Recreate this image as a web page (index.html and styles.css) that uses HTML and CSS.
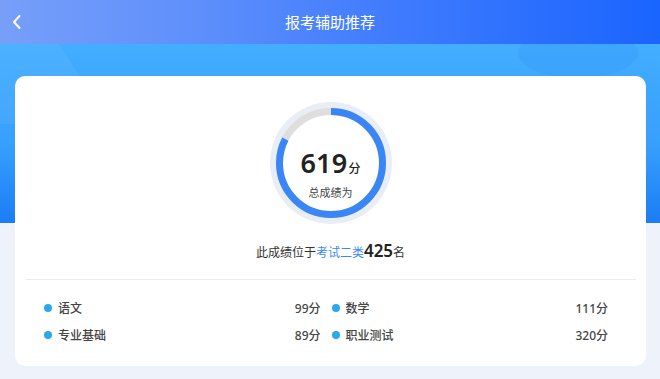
FILE: index.html
```html
<!DOCTYPE html>
<html lang="zh-CN">
<head>
<meta charset="utf-8">
<title>报考辅助推荐</title>
<link rel="stylesheet" href="styles.css">
</head>
<body>
<header class="topbar">
  <span class="back">
    <svg width="12" height="16" viewBox="0 0 12 16"><path d="M8.5 2 L3 8 L8.5 14" fill="none" stroke="#fff" stroke-width="2" stroke-linecap="round" stroke-linejoin="round"/></svg>
  </span>
  <h1 class="title">报考辅助推荐</h1>
</header>
<main class="hero">
  <span class="deco-slant"></span>
  <span class="deco-oval"></span>
  <section class="card">
    <div class="ring">
      <svg class="ring-svg" width="122" height="122" viewBox="0 0 122 122">
        <circle cx="61" cy="61" r="61" fill="#e9edf5"/>
        <circle cx="61" cy="61" r="51.5" fill="#fff" stroke="#dedede" stroke-width="7"/>
        <circle cx="61" cy="61" r="51.5" fill="none" stroke="#3a86f6" stroke-width="7" stroke-dasharray="267 400" transform="rotate(-90 61 61)"/>
      </svg>
      <div class="ring-text">
        <div class="score"><span class="num">619</span><span class="unit">分</span></div>
        <div class="score-label">总成绩为</div>
      </div>
    </div>
    <p class="rank">此成绩位于<span class="rank-cat">考试二类</span><span class="rank-num">425</span>名</p>
    <div class="divider"></div>
    <ul class="subjects">
      <li class="subject"><span class="dot"></span><span class="name">语文</span><span class="val">99分</span></li>
      <li class="subject"><span class="dot"></span><span class="name">数学</span><span class="val">111分</span></li>
      <li class="subject"><span class="dot"></span><span class="name">专业基础</span><span class="val">89分</span></li>
      <li class="subject"><span class="dot"></span><span class="name">职业测试</span><span class="val">320分</span></li>
    </ul>
  </section>
</main>
</body>
</html>
```
FILE: styles.css
```css
* { box-sizing: border-box; }
html, body {
  margin: 0;
  padding: 0;
  background: #eef2fb;
  font-family: "Noto Sans", "Noto Sans CJK SC", sans-serif;
  color: #333;
}
.topbar {
  height: 44px;
  background: linear-gradient(90deg, #779ffa 0%, #5e8ffb 30%, #3f7bfd 60%, #1a64ff 100%);
  display: flex;
  align-items: center;
  justify-content: center;
  position: relative;
  z-index: 2;
}
.back {
  position: absolute;
  left: 11px;
  top: 14px;
  display: flex;
}
.title {
  margin: 0;
  font-size: 15px;
  font-weight: 400;
  color: #fff;
  line-height: 20px;
}
.hero {
  position: relative;
  overflow: hidden;
  padding: 32px 14px 14px 15px;
  background: linear-gradient(180deg, #43adff 0px, #36a0fd 100px, #1c7cf4 179px, #eef2fb 179px) no-repeat;
}
.deco-slant {
  position: absolute;
  left: -40px;
  top: 0;
  width: 150px;
  height: 80px;
  background: rgba(255,255,255,0.05);
  clip-path: polygon(0 0, 66% 0, 100% 100%, 0 100%);
}
.deco-oval {
  position: absolute;
  left: 518px;
  top: -16px;
  width: 120px;
  height: 50px;
  border-radius: 50%;
  background: rgba(20,90,220,0.07);
}
.card {
  position: relative;
  background: #fff;
  border-radius: 10px;
  padding: 26px 38px 18px 29px;
  display: flex;
  flex-direction: column;
  align-items: center;
}
.ring {
  display: grid;
  width: 122px;
  height: 122px;
  margin-left: 9px;
}
.ring-svg, .ring-text { grid-area: 1 / 1; }
.ring-text {
  display: flex;
  flex-direction: column;
  align-items: center;
  padding-top: 44px;
}
.score {
  display: flex;
  align-items: baseline;
  line-height: 34px;
  color: #222;
}
.num {
  font-size: 27px;
  font-weight: 600;
  letter-spacing: 0.3px;
}
.unit {
  font-size: 12px;
  font-weight: 500;
  margin-left: 1px;
}
.score-label {
  font-size: 11px;
  line-height: 14px;
  color: #444;
}
.rank {
  margin: 17px 0 0 9px;
  font-size: 12px;
  line-height: 20px;
  color: #333;
  display: flex;
  align-items: baseline;
}
.rank-cat { color: #3a8bf7; }
.rank-num {
  font-size: 17px;
  font-weight: 600;
  color: #222;
}
.divider {
  align-self: stretch;
  height: 1px;
  background: #e8eaef;
  margin: 16px -28px 0 -18px;
}
.subjects {
  align-self: stretch;
  list-style: none;
  margin: 14px 0 0 0;
  padding: 0;
  display: grid;
  grid-template-columns: 1fr 1fr;
  column-gap: 11px;
}
.subject {
  display: flex;
  align-items: center;
  height: 27px;
  font-size: 12px;
  font-weight: 500;
  color: #444;
}
.dot {
  width: 8px;
  height: 8px;
  border-radius: 50%;
  background: #2aa9ea;
  margin-right: 6px;
}
.name { flex: 1; }
.val { color: #444; }
```
